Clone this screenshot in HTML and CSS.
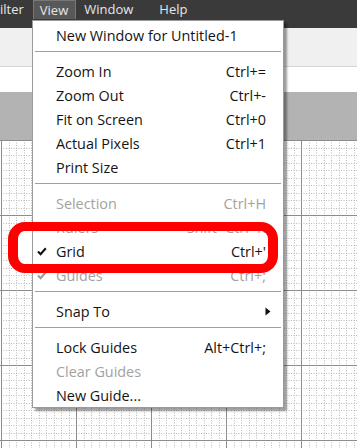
FILE: index.html
```html
<!DOCTYPE html>
<html>
<head>
<meta charset="utf-8">
<link rel="stylesheet" href="styles.css">
</head>
<body>
<div class="app">
  <div class="menubar">
    <span class="mb-item first">ilter</span>
    <span class="mb-item active">View</span>
    <span class="mb-item">Window</span>
    <span class="mb-item">Help</span>
  </div>
  <div class="toolbar"></div>
  <div class="optionsbar"></div>
  <div class="tabbar"></div>
  <div class="canvas">
    <svg class="grid" width="100%" height="100%">
      <defs>
        <pattern id="g" x="1" y="0" width="75" height="75" patternUnits="userSpaceOnUse">
          <g stroke="#b9b9b9" stroke-width="1" stroke-dasharray="1 1.5">
            <path d="M8.5 0V75M15.5 0V75M23.5 0V75M30.5 0V75M38.5 0V75M45.5 0V75M53.5 0V75M60.5 0V75M68.5 0V75"/>
            <path d="M0 8.5H75M0 15.5H75M0 23.5H75M0 30.5H75M0 38.5H75M0 45.5H75M0 53.5H75M0 60.5H75M0 68.5H75"/>
          </g>
          <path d="M0.5 0V75M0 0.5H75" stroke="#8c8c8c" stroke-width="1"/>
        </pattern>
      </defs>
      <rect width="100%" height="100%" fill="url(#g)"/>
    </svg>
  </div>
</div>

<div class="hl-fill"></div>

<div class="menu">
  <div class="mi"><span class="ck"></span><span class="lb">New Window for Untitled-1</span></div>
  <div class="sep"></div>
  <div class="mi"><span class="ck"></span><span class="lb">Zoom In</span><span class="sc">Ctrl+=</span></div>
  <div class="mi"><span class="ck"></span><span class="lb">Zoom Out</span><span class="sc">Ctrl+-</span></div>
  <div class="mi"><span class="ck"></span><span class="lb">Fit on Screen</span><span class="sc">Ctrl+0</span></div>
  <div class="mi"><span class="ck"></span><span class="lb">Actual Pixels</span><span class="sc">Ctrl+1</span></div>
  <div class="mi"><span class="ck"></span><span class="lb">Print Size</span></div>
  <div class="sep"></div>
  <div class="mi dis"><span class="ck"></span><span class="lb">Selection</span><span class="sc">Ctrl+H</span></div>
  <div class="mi dis"><span class="ck"></span><span class="lb">Rulers</span><span class="sc">Shift+Ctrl+R</span></div>
  <div class="mi"><span class="ck"><svg width="10" height="9" viewBox="0 0 10 9"><path d="M1 4.6L3.6 7.3L8.8 1.2" fill="none" stroke="#111" stroke-width="2.1"/></svg></span><span class="lb">Grid</span><span class="sc">Ctrl+'</span></div>
  <div class="mi dis"><span class="ck"><svg width="10" height="9" viewBox="0 0 10 9"><path d="M1 4.6L3.6 7.3L8.8 1.2" fill="none" stroke="#9c9c9c" stroke-width="2.1"/></svg></span><span class="lb">Guides</span><span class="sc">Ctrl+;</span></div>
  <div class="sep"></div>
  <div class="mi"><span class="ck"></span><span class="lb">Snap To</span><span class="arrow"><svg width="6" height="9" viewBox="0 0 6 9"><path d="M0.5 0.5L5.5 4.5L0.5 8.5Z" fill="#111"/></svg></span></div>
  <div class="sep"></div>
  <div class="mi"><span class="ck"></span><span class="lb">Lock Guides</span><span class="sc">Alt+Ctrl+;</span></div>
  <div class="mi dis"><span class="ck"></span><span class="lb">Clear Guides</span></div>
  <div class="mi"><span class="ck"></span><span class="lb">New Guide...</span></div>
</div>

<div class="hl-ring"></div>
</body>
</html>
```

FILE: styles.css
```css
* { box-sizing: border-box; }
html, body {
  margin: 0;
  padding: 0;
}
body {
  width: 357px;
  height: 448px;
  overflow: hidden;
  position: relative;
  font-family: "Open Sans", "Noto Sans", sans-serif;
  background: #ffffff;
}
.app {
  display: flex;
  flex-direction: column;
  height: 448px;
}
.menubar {
  height: 28px;
  background: #3a3a3a;
  display: flex;
  align-items: flex-start;
  font-size: 13px;
  color: #e6e6e6;
}
.mb-item {
  height: 19px;
  line-height: 19px;
  padding: 0 8px;
}
.mb-item.first {
  padding: 0 9px 0 0;
}
.mb-item.active {
  background: #585858;
  border: 1px solid #777777;
  border-bottom: none;
  line-height: 18px;
  padding: 0 7px 0 6px;
  margin-right: 0;
}
.mb-item.active + .mb-item {
  padding-left: 8px;
  padding-right: 18px;
}
.toolbar {
  height: 39px;
  background: #f0f0f0;
  border-bottom: 1px solid #d6d6d6;
}
.optionsbar {
  height: 25px;
  background: #ffffff;
}
.tabbar {
  height: 48px;
  background: #b3b3b3;
}
.canvas {
  flex: 1;
  background: #ffffff;
}
.grid {
  display: block;
}

.menu {
  position: absolute;
  left: 32px;
  top: 20px;
  width: 252px;
  background: #ffffff;
  border: 1px solid #9a9a9a;
  padding: 2px 0 0 0;
  box-shadow: 3px 3px 2px rgba(0, 0, 0, 0.38);
  font-size: 14.4px;
  color: #141414;
}
.mi {
  display: flex;
  align-items: center;
  height: 24px;
  padding: 0 17px 0 4px;
  white-space: nowrap;
}
.mi.dis {
  color: #a2a2a2;
}
.ck {
  width: 19px;
  height: 24px;
  display: flex;
  align-items: center;
}
.ck svg { display: block; margin-top: 1px; }
.lb {
  flex: 1;
}
.sc {
  text-align: right;
}
.arrow {
  display: flex;
  align-items: center;
  margin-right: -5px;
}
.arrow svg { display: block; }
.sep {
  height: 1px;
  margin: 4px 2px 7px 2px;
  background: #a0a0a0;
}

.hl-fill {
  position: absolute;
  left: 8px;
  top: 222px;
  width: 270px;
  height: 51px;
  border-radius: 17px;
  background: #ffffff;
}
.hl-ring {
  position: absolute;
  left: 8px;
  top: 222px;
  width: 270px;
  height: 51px;
  border: 9px solid #fe0000;
  border-left-width: 10px;
  border-right-width: 10px;
  border-radius: 17px;
}
```
